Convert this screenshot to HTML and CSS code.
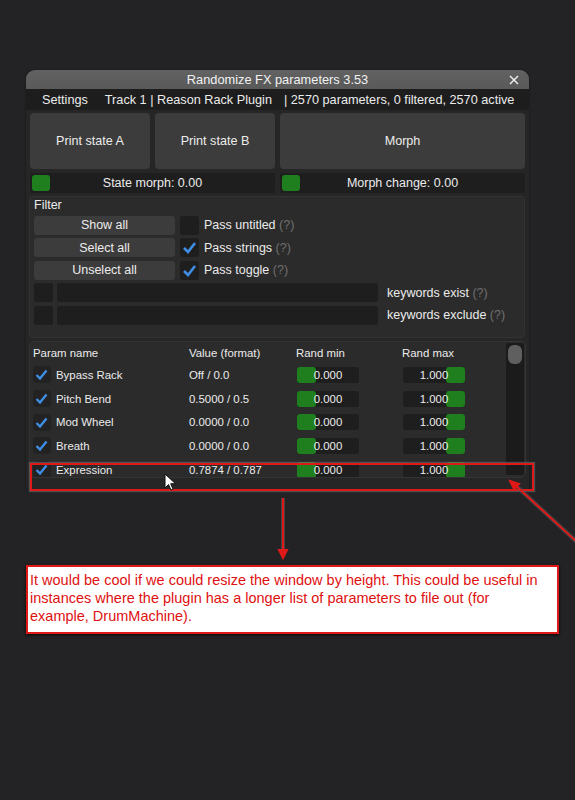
FILE: index.html
```html
<!DOCTYPE html>
<html lang="en">
<head>
    <meta charset="UTF-8">
    <meta name="viewport" content="width=device-width, initial-scale=1.0">
    <title>Randomize FX parameters</title>
    <link rel="stylesheet" href="styles.css">
</head>
<body>
    <div class="plugin-window">
        <div class="title-bar">
            <span class="title">Randomize FX parameters 3.53</span>
            <svg class="close-icon" width="10" height="10" viewBox="0 0 10 10">
                <path d="M1 1 L9 9 M9 1 L1 9" stroke="#f2f2f2" stroke-width="1.4"/>
            </svg>
        </div>
        <div class="menu-bar">
            <span class="menu-item">Settings</span>
            <span class="menu-item track">Track 1 | Reason Rack Plugin</span>
            <span class="menu-item stats">| 2570 parameters, 0 filtered, 2570 active</span>
        </div>

        <div class="window-body">
            <div class="morph-buttons">
                <button class="big-btn state-btn">Print state A</button>
                <button class="big-btn state-btn">Print state B</button>
                <button class="big-btn morph-btn">Morph</button>
            </div>

            <div class="morph-sliders">
                <div class="slider wide-slider">
                    <span class="grab"></span>
                    <span class="slider-label">State morph: 0.00</span>
                </div>
                <div class="slider wide-slider">
                    <span class="grab"></span>
                    <span class="slider-label">Morph change: 0.00</span>
                </div>
            </div>

            <div class="filter-panel">
                <div class="panel-title">Filter</div>
                <div class="filter-row">
                    <button class="small-btn">Show all</button>
                    <span class="checkbox"></span>
                    <span class="check-label">Pass untitled <span class="help">(?)</span></span>
                </div>
                <div class="filter-row">
                    <button class="small-btn">Select all</button>
                    <span class="checkbox">
                        <svg width="19" height="19" viewBox="0 0 19 19"><path d="M4 10 L8 14 L15 5" fill="none" stroke="#3f8ee6" stroke-width="2.6"/></svg>
                    </span>
                    <span class="check-label">Pass strings <span class="help">(?)</span></span>
                </div>
                <div class="filter-row">
                    <button class="small-btn">Unselect all</button>
                    <span class="checkbox">
                        <svg width="19" height="19" viewBox="0 0 19 19"><path d="M4 10 L8 14 L15 5" fill="none" stroke="#3f8ee6" stroke-width="2.6"/></svg>
                    </span>
                    <span class="check-label">Pass toggle <span class="help">(?)</span></span>
                </div>
                <div class="keyword-row">
                    <span class="checkbox"></span>
                    <span class="keyword-input"></span>
                    <span class="check-label">keywords exist <span class="help">(?)</span></span>
                </div>
                <div class="keyword-row">
                    <span class="checkbox"></span>
                    <span class="keyword-input"></span>
                    <span class="check-label">keywords exclude <span class="help">(?)</span></span>
                </div>
            </div>

            <div class="table-panel">
                <div class="param-list">
                    <div class="param-row param-head">
                        <span class="head-name">Param name</span>
                        <span>Value (format)</span>
                        <span>Rand min</span>
                        <span>Rand max</span>
                    </div>
                    <div class="param-row">
                        <span class="row-check"><svg width="17" height="17" viewBox="0 0 17 17"><path d="M3.5 9 L7 12.5 L13.5 4.5" fill="none" stroke="#3f8ee6" stroke-width="2.4"/></svg></span>
                        <span>Bypass Rack</span>
                        <span>Off / 0.0</span>
                        <span class="slider range-slider"><span class="grab grab-min"></span><span class="slider-label">0.000</span></span>
                        <span class="slider range-slider"><span class="grab grab-max"></span><span class="slider-label">1.000</span></span>
                    </div>
                    <div class="param-row">
                        <span class="row-check"><svg width="17" height="17" viewBox="0 0 17 17"><path d="M3.5 9 L7 12.5 L13.5 4.5" fill="none" stroke="#3f8ee6" stroke-width="2.4"/></svg></span>
                        <span>Pitch Bend</span>
                        <span>0.5000 / 0.5</span>
                        <span class="slider range-slider"><span class="grab grab-min"></span><span class="slider-label">0.000</span></span>
                        <span class="slider range-slider"><span class="grab grab-max"></span><span class="slider-label">1.000</span></span>
                    </div>
                    <div class="param-row">
                        <span class="row-check"><svg width="17" height="17" viewBox="0 0 17 17"><path d="M3.5 9 L7 12.5 L13.5 4.5" fill="none" stroke="#3f8ee6" stroke-width="2.4"/></svg></span>
                        <span>Mod Wheel</span>
                        <span>0.0000 / 0.0</span>
                        <span class="slider range-slider"><span class="grab grab-min"></span><span class="slider-label">0.000</span></span>
                        <span class="slider range-slider"><span class="grab grab-max"></span><span class="slider-label">1.000</span></span>
                    </div>
                    <div class="param-row">
                        <span class="row-check"><svg width="17" height="17" viewBox="0 0 17 17"><path d="M3.5 9 L7 12.5 L13.5 4.5" fill="none" stroke="#3f8ee6" stroke-width="2.4"/></svg></span>
                        <span>Breath</span>
                        <span>0.0000 / 0.0</span>
                        <span class="slider range-slider"><span class="grab grab-min"></span><span class="slider-label">0.000</span></span>
                        <span class="slider range-slider"><span class="grab grab-max"></span><span class="slider-label">1.000</span></span>
                    </div>
                    <div class="param-row">
                        <span class="row-check"><svg width="17" height="17" viewBox="0 0 17 17"><path d="M3.5 9 L7 12.5 L13.5 4.5" fill="none" stroke="#3f8ee6" stroke-width="2.4"/></svg></span>
                        <span>Expression</span>
                        <span>0.7874 / 0.787</span>
                        <span class="slider range-slider"><span class="grab grab-min"></span><span class="slider-label">0.000</span></span>
                        <span class="slider range-slider"><span class="grab grab-max"></span><span class="slider-label">1.000</span></span>
                    </div>
                </div>
                <div class="scrollbar"><span class="thumb"></span></div>
            </div>
        </div>
    </div>

    <div class="callout">
        It would be cool if we could resize the window by height. This could be useful in<br>
        instances where the plugin has a longer list of parameters to file out (for<br>
        example, DrumMachine).
    </div>

    <!-- annotation overlays -->
    <div class="highlight-box"></div>
    <svg class="arrows" width="575" height="800" viewBox="0 0 575 800">
        <g stroke="#5a5a5a" stroke-width="4" fill="none" opacity="0.6">
            <path d="M283 498 L283 553"/>
            <path d="M578 543 L514 484"/>
        </g>
        <g stroke="#e01818" stroke-width="2" fill="#e01818">
            <path d="M283 498 L283 552"/>
            <path d="M279 550 L283 558 L287 550 Z"/>
            <path d="M578 543 L515 485"/>
            <path d="M510 481 L519 484 L514 489 Z"/>
        </g>
    </svg>
    <svg class="cursor" width="14" height="19" viewBox="0 0 14 19">
        <path d="M1 1 L1 15 L4.5 11.5 L7 17 L9 16 L6.7 10.7 L11.5 10.7 Z" fill="#fff" stroke="#111" stroke-width="1"/>
    </svg>
</body>
</html>
```

FILE: styles.css
```css
body {
    margin: 0;
    background-color: #232325;
    font-family: 'Liberation Sans', Arial, sans-serif;
    font-size: 12.5px;
    color: #ececec;
    position: relative;
    min-height: 800px;
}

button {
    font-family: inherit;
    font-size: inherit;
    color: inherit;
    border: none;
    padding: 0;
    cursor: pointer;
}

.plugin-window {
    margin: 70px 0 0 26px;
    width: 503px;
    background-color: #262626;
    border-radius: 9px 9px 3px 3px;
    box-shadow: 0 0 2px rgba(0, 0, 0, 0.5);
}

.title-bar {
    height: 19px;
    background: linear-gradient(#626262, #595959);
    border-radius: 9px 9px 0 0;
    display: flex;
    align-items: center;
    justify-content: center;
    position: relative;
}

.title {
    font-size: 12.8px;
    color: #f2f2f2;
}

.close-icon {
    position: absolute;
    right: 10px;
    top: 5px;
}

.menu-bar {
    height: 21px;
    background-color: #1d1d1d;
    display: flex;
    align-items: center;
    padding-left: 16px;
    font-size: 12.7px;
}

.track {
    margin-left: 17px;
}

.stats {
    margin-left: 12px;
}

.window-body {
    padding: 3px 4px 12px 4px;
}

.morph-buttons {
    display: flex;
    gap: 5px;
    height: 56px;
}

.big-btn {
    background-color: #3c3c3c;
    border-radius: 4px;
    font-size: 12.6px;
}

.state-btn {
    width: 120px;
}

.morph-btn {
    flex: 1;
}

.morph-sliders {
    display: flex;
    gap: 5px;
    margin-top: 4px;
    height: 20px;
}

.slider {
    position: relative;
    background-color: #1e1e1e;
    border-radius: 3px;
    display: flex;
    align-items: center;
    justify-content: center;
}

.wide-slider {
    flex: 1;
}

.grab {
    position: absolute;
    top: 2px;
    left: 2px;
    width: 18px;
    height: 16px;
    background-color: #1f7f1f;
    border-radius: 3px;
}

.slider-label {
    position: relative;
}

.filter-panel {
    margin: 3px 0 0 -1px;
    width: 496px;
    height: 142px;
    box-sizing: border-box;
    background-color: #2b2b2b;
    border: 1px solid #333;
    border-radius: 4px;
    padding: 1px 4px;
    display: flex;
    flex-direction: column;
    gap: 3.6px;
}

.panel-title {
    height: 14px;
    line-height: 15px;
}

.filter-row,
.keyword-row {
    display: flex;
    align-items: center;
    height: 19px;
}

.small-btn {
    width: 141px;
    height: 19px;
    background-color: #3c3c3c;
    border-radius: 3px;
    margin-right: 5px;
}

.checkbox {
    width: 19px;
    height: 19px;
    background-color: #1e1e1e;
    border-radius: 3px;
    margin-right: 5px;
    flex-shrink: 0;
}

.checkbox svg {
    display: block;
}

.keyword-row .checkbox {
    margin-right: 4px;
}

.keyword-input {
    width: 321px;
    height: 19px;
    background-color: #1e1e1e;
    border-radius: 3px;
    margin-right: 9px;
}

.help {
    color: #6f6f6f;
}

.table-panel {
    margin: 3px 0 0 -1px;
    width: 497px;
    height: 137px;
    box-sizing: border-box;
    background-color: #2b2b2b;
    border: 1px solid #333;
    border-radius: 5px;
    display: flex;
    overflow: hidden;
}

.param-list {
    flex: 1;
    padding: 1px 0 0 3px;
    font-size: 11.4px;
    overflow: hidden;
}

.param-row {
    display: grid;
    grid-template-columns: 23px 133px 107px 106px 63px;
    align-items: center;
    height: 23.7px;
}

.param-head {
    height: 20px;
}

.head-name {
    grid-column: 1 / 3;
}

.row-check {
    width: 18px;
    height: 17px;
    background-color: #222;
    border-radius: 4px;
}

.row-check svg {
    display: block;
}

.range-slider {
    height: 16px;
    width: 62px;
    margin-left: 1px;
}

.range-slider .grab {
    top: 0;
    height: 16px;
    width: 19px;
}

.grab-min {
    left: 0;
}

.grab-max {
    left: auto;
    right: 0;
}

.scrollbar {
    width: 18px;
    margin: 1px 1px 2px 0;
    background-color: #1b1b1b;
    border-radius: 2px;
    display: flex;
    justify-content: center;
}

.thumb {
    margin-top: 2px;
    width: 14px;
    height: 19px;
    background-color: #5f5f5f;
    border-radius: 6px;
}

.callout {
    margin: 75px 0 0 26px;
    width: 533px;
    height: 69px;
    box-sizing: border-box;
    background-color: #fff;
    border: 2px solid #e01818;
    padding: 4px 0 0 2px;
    color: #e01010;
    font-size: 14.5px;
    line-height: 18px;
    box-shadow: 0 1px 3px rgba(0, 0, 0, 0.8);
}

.highlight-box {
    position: absolute;
    left: 30px;
    top: 463px;
    width: 504px;
    height: 28px;
    box-sizing: border-box;
    border: 2px solid #e01818;
    box-shadow: 0 0 1px 1px rgba(110, 110, 110, 0.6);
}

.arrows {
    position: absolute;
    left: 0;
    top: 0;
    pointer-events: none;
}

.cursor {
    position: absolute;
    left: 164px;
    top: 473px;
}
```
